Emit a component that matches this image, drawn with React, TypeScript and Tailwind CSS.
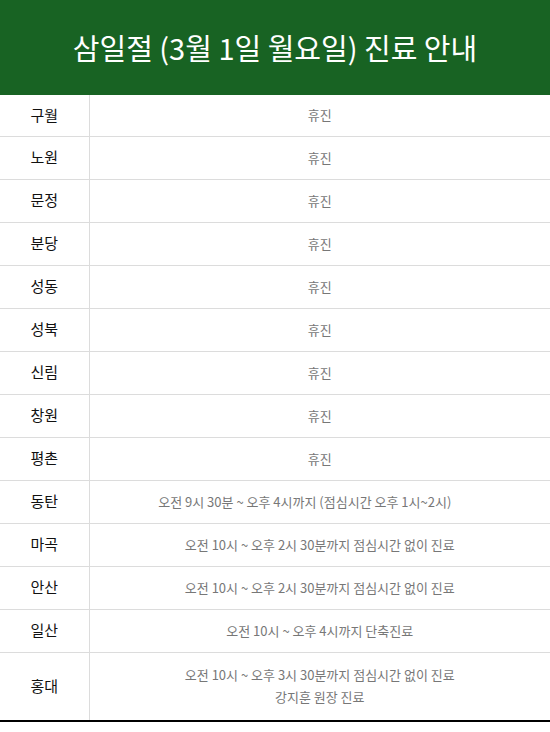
const rows: { name: string; lines: string[]; shift?: boolean }[] = [
  { name: '구월', lines: ['휴진'] },
  { name: '노원', lines: ['휴진'] },
  { name: '문정', lines: ['휴진'] },
  { name: '분당', lines: ['휴진'] },
  { name: '성동', lines: ['휴진'] },
  { name: '성북', lines: ['휴진'] },
  { name: '신림', lines: ['휴진'] },
  { name: '창원', lines: ['휴진'] },
  { name: '평촌', lines: ['휴진'] },
  { name: '동탄', lines: ['오전 9시 30분 ~ 오후 4시까지 (점심시간 오후 1시~2시)'], shift: true },
  { name: '마곡', lines: ['오전 10시 ~ 오후 2시 30분까지 점심시간 없이 진료'] },
  { name: '안산', lines: ['오전 10시 ~ 오후 2시 30분까지 점심시간 없이 진료'] },
  { name: '일산', lines: ['오전 10시 ~ 오후 4시까지 단축진료'] },
  { name: '홍대', lines: ['오전 10시 ~ 오후 3시 30분까지 점심시간 없이 진료', '강지훈 원장 진료'] },
];

export default function App() {
  return (
    <div className="w-[550px] bg-white font-['Noto_Sans_CJK_KR','Noto_Sans',sans-serif]">
      {/* header */}
      <div className="h-[95px] bg-[#186323] flex items-center justify-center">
        <h1 className="text-[29px] text-white font-normal">삼일절 (3월 1일 월요일) 진료 안내</h1>
      </div>

      {/* schedule */}
      <table className="w-full border-collapse border-b-2 border-b-black">
        <tbody>
          {rows.map((r, i) => (
            <tr key={r.name} className={i < rows.length - 1 ? 'border-b border-[#dcdcdc]' : ''}>
              <td
                className={`w-[89px] border-r border-[#dcdcdc] text-center text-[15px] text-[#111] ${
                  i === 0 ? 'h-[41px]' : r.lines.length > 1 ? 'h-[69px]' : 'h-[43px]'
                }`}
              >
                {r.name}
              </td>
              <td className={`text-center text-[13px] leading-[22px] text-[#777] ${r.shift ? 'pr-[30px]' : ''}`}>
                {r.lines.map((l) => (
                  <div key={l}>{l}</div>
                ))}
              </td>
            </tr>
          ))}
        </tbody>
      </table>
    </div>
  );
}
